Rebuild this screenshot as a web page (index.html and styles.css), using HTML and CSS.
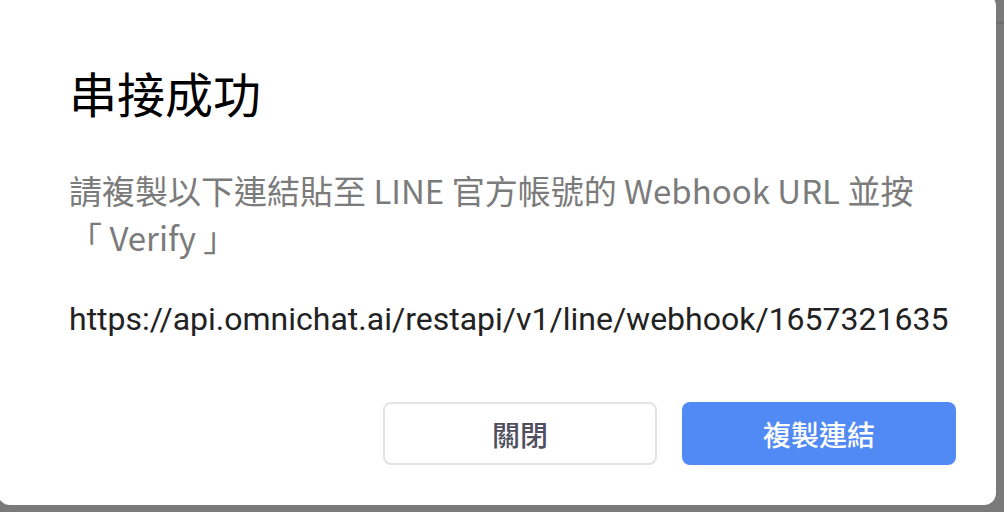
FILE: index.html
```html
<!DOCTYPE html>
<html lang="zh-Hant">
<head>
<meta charset="utf-8">
<title>串接成功</title>
<link rel="stylesheet" href="styles.css">
</head>
<body>
<div class="dialog">
  <h1 class="title">串接成功</h1>
  <p class="desc">請複製以下連結貼至 LINE 官方帳號的 Webhook URL 並按「 Verify 」</p>
  <p class="url">https://api.omnichat.ai/restapi/v1/line/webhook/1657321635</p>
  <div class="actions">
    <button class="btn btn-secondary">關閉</button>
    <button class="btn btn-primary">複製連結</button>
  </div>
</div>
</body>
</html>
```

FILE: styles.css
```css
html, body {
  margin: 0;
  padding: 0;
  width: 1004px;
  height: 512px;
  overflow: hidden;
}
body {
  background:
    linear-gradient(to bottom, transparent 22px, #6e6e6e 22px, #6e6e6e 24px, transparent 24px),
    #7a7a7a;
  font-family: "Noto Sans CJK TC", "Noto Sans", sans-serif;
}
.dialog {
  box-sizing: border-box;
  margin: -6px 0 0 -2px;
  width: 998px;
  height: 511px;
  background: #fff;
  border-radius: 12px;
  padding: 68px 40px 0 71px;
  display: flex;
  flex-direction: column;
}
.title {
  margin: 0;
  font-size: 48px;
  line-height: 60px;
  font-weight: 400;
  color: #000;
}
.desc {
  margin: 45px 0 0;
  max-width: 848px;
  font-size: 33px;
  line-height: 47px;
  color: #7b7b7b;
}
.url {
  margin: 38px 0 0;
  font-family: Roboto, "Noto Sans", sans-serif;
  font-size: 32px;
  line-height: 40px;
  color: #222;
  white-space: nowrap;
}
.actions {
  margin-top: 63px;
  display: flex;
  justify-content: flex-end;
  gap: 25px;
}
.btn {
  box-sizing: border-box;
  width: 274px;
  height: 63px;
  border-radius: 8px;
  font-family: "Noto Sans CJK TC", sans-serif;
  font-size: 28px;
  font-weight: 500;
  cursor: pointer;
}
.btn-secondary {
  background: #fff;
  border: 2px solid #e3e3e3;
  color: #4e4e5c;
}
.btn-primary {
  background: #528af5;
  border: none;
  color: #fff;
}
```
